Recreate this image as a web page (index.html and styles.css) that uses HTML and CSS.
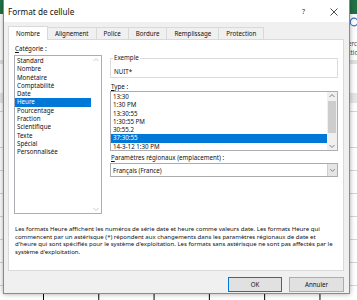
FILE: index.html
```html
<!DOCTYPE html>
<html lang="fr">
<head>
    <meta charset="UTF-8" />
    <meta name="viewport" content="width=device-width, initial-scale=1.0" />
    <title>Format de cellule</title>
    <link rel="stylesheet" href="styles.css">
</head>
<body>
    <!-- Excel window behind the dialog -->
    <div class="excel">
        <div class="excel-titlebar"></div>
        <div class="excel-ribbon">
            <div class="ribbon-group">
                <svg class="ribbon-icon" width="12" height="11" viewBox="0 0 12 11">
                    <circle cx="6" cy="5" r="3.8" fill="none" stroke="#3f78c0" stroke-width="1.2"/>
                </svg>
                <span>Rechercher et</span>
                <span>sélectionner</span>
            </div>
        </div>
        <div class="excel-formulabar"></div>
        <div class="excel-colheader"></div>
        <div class="excel-grid"></div>
    </div>

    <div class="dialog">
        <div class="dialog-titlebar">
            <span class="dialog-title">Format de cellule</span>
            <span class="dialog-help">?</span>
            <svg class="dialog-close" width="8" height="8" viewBox="0 0 8 8">
                <path d="M0.5 0.5 L7.5 7.5 M7.5 0.5 L0.5 7.5" stroke="#222" stroke-width="0.8"/>
            </svg>
        </div>

        <div class="tabs">
            <div class="tab tab--active">Nombre</div>
            <div class="tab">Alignement</div>
            <div class="tab">Police</div>
            <div class="tab">Bordure</div>
            <div class="tab">Remplissage</div>
            <div class="tab">Protection</div>
        </div>

        <div class="tab-panel">
            <div class="panel-columns">
                <div class="category-col">
                    <div class="field-label"><u>C</u>atégorie :</div>
                    <div class="listbox category-list">
                        <ul class="list-items">
                            <li>Standard</li>
                            <li>Nombre</li>
                            <li>Monétaire</li>
                            <li>Comptabilité</li>
                            <li>Date</li>
                            <li class="selected">Heure</li>
                            <li>Pourcentage</li>
                            <li>Fraction</li>
                            <li>Scientifique</li>
                            <li>Texte</li>
                            <li>Spécial</li>
                            <li>Personnalisée</li>
                        </ul>
                        <div class="scrollbar">
                            <svg class="scroll-arrow" width="10" height="8" viewBox="0 0 10 8"><path d="M2.5 5 L5 2.5 L7.5 5" fill="none" stroke="#bdbdbd" stroke-width="0.8"/></svg>
                            <div class="scroll-track"></div>
                            <svg class="scroll-arrow" width="10" height="8" viewBox="0 0 10 8"><path d="M2.5 3 L5 5.5 L7.5 3" fill="none" stroke="#bdbdbd" stroke-width="0.8"/></svg>
                        </div>
                    </div>
                </div>

                <div class="format-col">
                    <fieldset class="sample">
                        <legend>Exemple</legend>
                        <div class="sample-value">NUIT*</div>
                    </fieldset>

                    <div class="field-label type-label"><u>T</u>ype :</div>
                    <div class="listbox type-list">
                        <ul class="list-items">
                            <li>13:30</li>
                            <li>1:30 PM</li>
                            <li>13:30:55</li>
                            <li>1:30:55 PM</li>
                            <li>30:55.2</li>
                            <li class="selected">37:30:55</li>
                            <li>14-3-12 1:30 PM</li>
                        </ul>
                        <div class="scrollbar">
                            <svg class="scroll-arrow" width="10" height="8" viewBox="0 0 10 8"><path d="M2.5 5 L5 2.5 L7.5 5" fill="none" stroke="#606060" stroke-width="0.8"/></svg>
                            <div class="scroll-track"><div class="scroll-thumb"></div></div>
                            <svg class="scroll-arrow" width="10" height="8" viewBox="0 0 10 8"><path d="M2.5 3 L5 5.5 L7.5 3" fill="none" stroke="#606060" stroke-width="0.8"/></svg>
                        </div>
                    </div>

                    <div class="field-label locale-label"><u>P</u>aramètres régionaux (emplacement) :</div>
                    <div class="combo">
                        <span class="combo-value">Français (France)</span>
                        <span class="combo-arrow">
                            <svg width="10" height="12" viewBox="0 0 10 12"><path d="M2.5 5 L5 7.5 L7.5 5" fill="none" stroke="#606060" stroke-width="0.8"/></svg>
                        </span>
                    </div>
                </div>
            </div>

            <p class="description">
                Les formats Heure affichent les numéros de série date et heure comme valeurs date. Les formats Heure qui<br>
                commencent par un astérisque (*) répondent aux changements dans les paramètres régionaux de date et<br>
                d'heure qui sont spécifiés pour le système d'exploitation. Les formats sans astérisque ne sont pas affectés par le<br>
                système d'exploitation.
            </p>
        </div>

        <div class="dialog-buttons">
            <button class="btn btn--default">OK</button>
            <button class="btn btn--cancel">Annuler</button>
        </div>
    </div>
</body>
</html>
```

FILE: styles.css
```css
/* General styles */
* {
    box-sizing: border-box;
}

body {
    margin: 0;
    width: 357px;
    height: 300px;
    overflow: hidden;
    position: relative;
    background: #fff;
    color: #111;
    font-family: "Noto Sans", "Liberation Sans", sans-serif;
    font-size: 6.2px;
}

/* Excel window behind */
.excel {
    height: 300px;
    display: flex;
    flex-direction: column;
}

.excel-titlebar {
    height: 14px;
    background: #217346;
}

.excel-ribbon {
    height: 46px;
    background: #fff;
    padding-left: 334px;
    overflow: hidden;
}

.ribbon-group {
    width: 40px;
    display: flex;
    flex-direction: column;
    align-items: center;
    padding-top: 3px;
    color: #444;
    line-height: 9px;
    white-space: nowrap;
}

.ribbon-icon {
    margin-bottom: 11px;
}

.excel-formulabar {
    height: 33px;
    border-top: 4px solid #e1e1e1;
    background: #fff;
}

.excel-colheader {
    height: 10px;
    background: #e6e6e6;
}

.excel-grid {
    flex: 1;
    background:
        linear-gradient(90deg, transparent 0 2px, #000 2px 3px, transparent 3px) 41px 0 / 55.3px 100% repeat-x,
        repeating-linear-gradient(180deg, transparent 0 22px, #d4d4d4 22px 23px) 0 22px / 100% 100%,
        #fff;
}

/* Dialog */
.dialog {
    position: absolute;
    left: 3px;
    top: -1px;
    width: 347px;
    height: 295px;
    background: #f0f0f0;
    border: 1px solid #8a8a8a;
    box-shadow: 0 0 5px rgba(0, 0, 0, 0.35);
    display: flex;
    flex-direction: column;
}

.dialog-titlebar {
    height: 22px;
    background: #fff;
    display: flex;
    align-items: center;
    padding: 1px 0 0 4px;
}

.dialog-title {
    font-size: 8.2px;
    flex: 1;
}

.dialog-help {
    font-size: 7px;
    color: #333;
    margin-right: 25px;
}

.dialog-close {
    margin-right: 11px;
}

.tabs {
    display: flex;
    margin-top: 4px;
    padding-left: 4px;
    height: 13px;
    align-items: flex-end;
}

.tab {
    height: 12px;
    padding: 0 7px;
    line-height: 11px;
    border: 1px solid #d9d9d9;
    border-bottom: none;
    margin-left: -1px;
    background: #f0f0f0;
}

.tab:first-child {
    margin-left: 0;
}

.tab--active {
    height: 14px;
    margin-bottom: -1px;
    background: #fff;
    position: relative;
    z-index: 1;
    padding-top: 1px;
}

.tab-panel {
    height: 232px;
    margin: 0 5px 0 4px;
    background: #fff;
    border: 1px solid #d9d9d9;
    padding: 5px 5px 0 5px;
}

.panel-columns {
    display: flex;
    gap: 8px;
}

.category-col {
    width: 88px;
}

.format-col {
    width: 228px;
}

.field-label {
    line-height: 8px;
    padding-left: 1px;
    margin-bottom: 2px;
}

.listbox {
    display: flex;
    border: 1px solid #abadb3;
    background: #fff;
}

.category-list {
    height: 159px;
}

.list-items {
    list-style: none;
    margin: 0;
    padding: 1px 0 0 0;
    flex: 1;
}

.list-items li {
    height: 8.3px;
    line-height: 8.3px;
    padding-left: 2px;
    white-space: nowrap;
}

.list-items li.selected {
    background: #0078d7;
    color: #fff;
}

.scrollbar {
    width: 10px;
    display: flex;
    flex-direction: column;
    background: #fff;
}

.scroll-arrow {
    display: block;
    flex: none;
}

.scroll-track {
    flex: 1;
}

.type-list .scrollbar {
    background: #f0f0f0;
}

.scroll-thumb {
    margin: 1px 1px 0 1px;
    height: 32px;
    background: #cdcdcd;
}

/* Exemple group */
.sample {
    margin: 9px 0 0 0;
    padding: 6px 2px 1px 2px;
    border: 1px solid #dcdcdc;
    min-width: 0;
}

.sample legend {
    padding: 0 1px;
    line-height: 8px;
    color: #222;
}

.sample-value {
    line-height: 8px;
    padding-left: 1px;
}

.type-label {
    margin-top: 5px;
    margin-bottom: 0;
}

.type-list {
    height: 60px;
}

.locale-label {
    margin-top: 3px;
    margin-bottom: 1px;
}

.combo {
    height: 14px;
    display: flex;
    align-items: center;
    border: 1px solid #acacac;
    background: #fff;
}

.combo-value {
    flex: 1;
    padding-left: 2px;
}

.combo-arrow {
    width: 10px;
    height: 12px;
    background: #e5e5e5;
    border-left: 1px solid #cfcfcf;
    display: flex;
}

.description {
    margin: 12px 0 0 0;
    padding-left: 1px;
    font-size: 6.05px;
    line-height: 7.7px;
    white-space: nowrap;
}

/* Buttons */
.dialog-buttons {
    display: flex;
    justify-content: flex-end;
    gap: 7px;
    margin-top: 6px;
    padding-right: 5px;
}

.btn {
    height: 15px;
    width: 55px;
    font-family: inherit;
    font-size: 6.2px;
    background: #e1e1e1;
    border: 1px solid #adadad;
    padding: 0;
    color: #111;
}

.btn--default {
    width: 54px;
    border-color: #0078d7;
}
```
